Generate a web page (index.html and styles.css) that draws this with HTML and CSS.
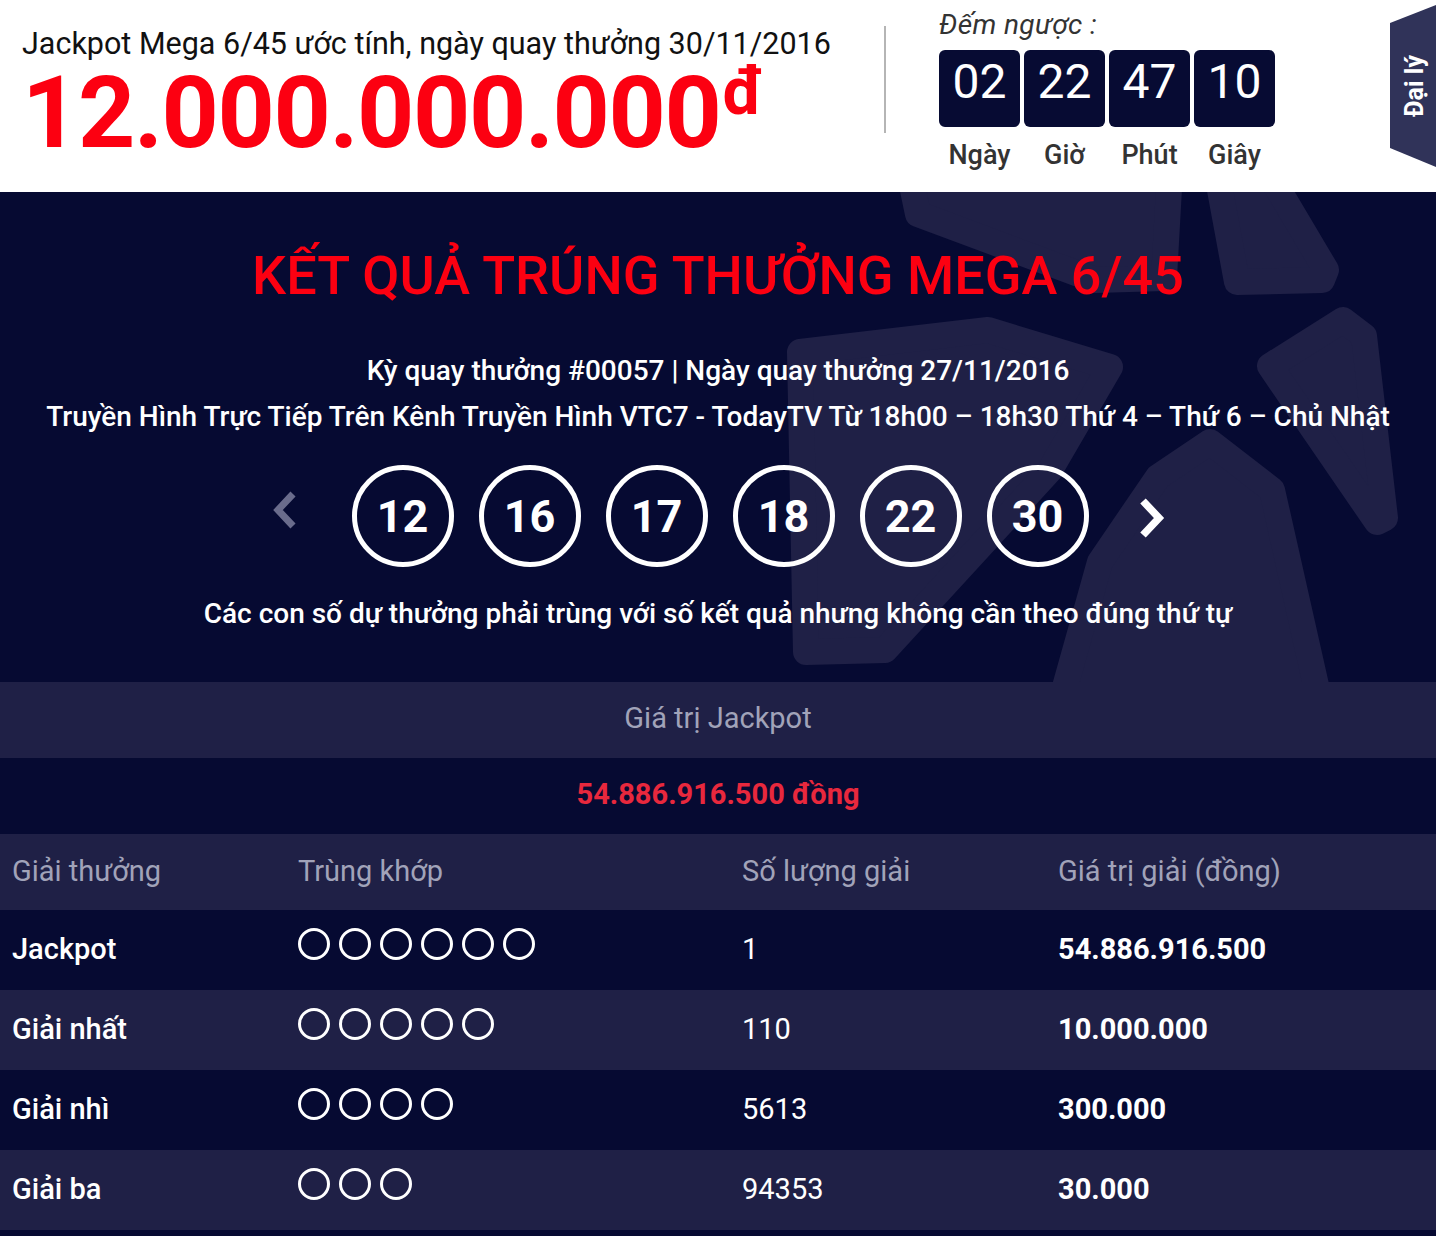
FILE: index.html
```html
<!DOCTYPE html>
<html lang="vi">
<head>
<meta charset="utf-8">
<title>Kết quả Mega 6/45</title>
<link rel="stylesheet" href="styles.css">
</head>
<body>
<header class="top">
  <div class="jp">
    <div class="jp-label">Jackpot Mega 6/45 ước tính, ngày quay thưởng 30/11/2016</div>
    <div class="jp-amount">12.000.000.000<span class="cur">đ</span></div>
  </div>
  <div class="divider"></div>
  <div class="countdown">
    <div class="cd-label">Đếm ngược :</div>
    <div class="cd-boxes">
      <div class="cd-box">02</div>
      <div class="cd-box">22</div>
      <div class="cd-box">47</div>
      <div class="cd-box">10</div>
    </div>
    <div class="cd-units">
      <span>Ngày</span><span>Giờ</span><span>Phút</span><span>Giây</span>
    </div>
  </div>
  <a class="agent-tab" href="#"><span>Đại lý</span></a>
</header>

<section class="results">
  <svg class="bg-logo" width="1436" height="490" viewBox="0 0 1436 490" aria-hidden="true">
    <g fill="#1f2046" stroke="#1f2046" stroke-width="26" stroke-linejoin="round">
      <polygon points="905,-40 1171,-40 1164,86 1095,88 918,22"/>
      <polygon points="1213,-40 1256,-40 1326,78 1322,88 1237,90"/>
      <polygon points="1270,174 1343,128 1364,144 1385,326 1377,330"/>
      <polygon points="1210,250 1272,298 1322,520 1058,520 1100,370 1158,285"/>
      <polygon points="800,160 988,138 1110,175 1050,278 885,458 806,460"/>
    </g>
  </svg>
  <div class="results-inner">
    <h1 class="res-title">KẾT QUẢ TRÚNG THƯỞNG MEGA 6/45</h1>
    <p class="res-info">Kỳ quay thưởng #00057 | Ngày quay thưởng 27/11/2016</p>
    <p class="res-info">Truyền Hình Trực Tiếp Trên Kênh Truyền Hình VTC7 - TodayTV Từ 18h00 – 18h30 Thứ 4 – Thứ 6 – Chủ Nhật</p>
    <div class="balls">
      <span class="nav prev">
        <svg width="26" height="38" viewBox="0 0 26 38"><polyline points="21,3 6,19 21,35" fill="none" stroke="#6a6c8c" stroke-width="7"/></svg>
      </span>
      <span class="ball">12</span>
      <span class="ball">16</span>
      <span class="ball">17</span>
      <span class="ball">18</span>
      <span class="ball">22</span>
      <span class="ball">30</span>
      <span class="nav next">
        <svg width="28" height="40" viewBox="0 0 28 40"><polyline points="6,3 22,20 6,37" fill="none" stroke="#ffffff" stroke-width="7.5"/></svg>
      </span>
    </div>
    <p class="res-note">Các con số dự thưởng phải trùng với số kết quả nhưng không cần theo đúng thứ tự</p>
  </div>
</section>

<section class="prizes">
  <div class="jp-value-head">Giá trị Jackpot</div>
  <div class="jp-value">54.886.916.500 đồng</div>
  <div class="prow head">
    <div>Giải thưởng</div>
    <div>Trùng khớp</div>
    <div>Số lượng giải</div>
    <div>Giá trị giải (đồng)</div>
  </div>
  <div class="prow dark">
    <div class="pname">Jackpot</div>
    <div class="dots"><i></i><i></i><i></i><i></i><i></i><i></i></div>
    <div>1</div>
    <div class="pval">54.886.916.500</div>
  </div>
  <div class="prow light">
    <div class="pname">Giải nhất</div>
    <div class="dots"><i></i><i></i><i></i><i></i><i></i></div>
    <div>110</div>
    <div class="pval">10.000.000</div>
  </div>
  <div class="prow dark">
    <div class="pname">Giải nhì</div>
    <div class="dots"><i></i><i></i><i></i><i></i></div>
    <div>5613</div>
    <div class="pval">300.000</div>
  </div>
  <div class="prow light">
    <div class="pname">Giải ba</div>
    <div class="dots"><i></i><i></i><i></i></div>
    <div>94353</div>
    <div class="pval">30.000</div>
  </div>
</section>
</body>
</html>
```

FILE: styles.css
```css
* { box-sizing: border-box; }
html, body { margin: 0; padding: 0; }
body {
  width: 1436px;
  font-family: Roboto, "Noto Sans", "Liberation Sans", sans-serif;
  background: #060a32;
  color: #fff;
}

/* ---------- top header ---------- */
.top {
  position: relative;
  display: flex;
  height: 192px;
  background: #fff;
  color: #000;
}
.jp {
  width: 863px;
  padding: 26px 0 0 22px;
}
.jp-label {
  font-size: 30.5px;
  line-height: 36px;
  color: #111;
  white-space: nowrap;
}
.jp-amount {
  margin-top: 1px;
  font-size: 100px;
  line-height: 100px;
  font-weight: 700;
  color: #fc0011;
  letter-spacing: -1.4px;
  white-space: nowrap;
}
.jp-amount .cur {
  display: inline-block;
  vertical-align: top;
  font-size: 66px;
  line-height: 58px;
  letter-spacing: 0;
  margin-left: 2px;
}
.divider {
  width: 2px;
  height: 107px;
  margin: 26px 0 0 21px;
  background: #b5b5b5;
}
.countdown {
  margin-left: 53px;
  padding-top: 10px;
}
.cd-label {
  font-size: 28px;
  line-height: 30px;
  font-style: italic;
  letter-spacing: 0.4px;
  color: #333;
}
.cd-boxes {
  display: flex;
  gap: 4px;
  margin-top: 10px;
}
.cd-box {
  width: 81px;
  height: 77px;
  border-radius: 6px;
  background: #070b33;
  color: #fff;
  font-size: 48px;
  line-height: 64px;
  text-align: center;
}
.cd-units {
  display: flex;
  gap: 4px;
  margin-top: 12px;
}
.cd-units span {
  width: 81px;
  text-align: center;
  font-size: 27px;
  line-height: 33px;
  font-weight: 500;
  color: #333;
}
.agent-tab {
  position: absolute;
  top: 5px;
  right: 0;
  width: 46px;
  height: 162px;
  background: #303359;
  clip-path: polygon(0 18px, 100% 0, 100% 100%, 0 143px);
  display: flex;
  align-items: center;
  justify-content: center;
  text-decoration: none;
}
.agent-tab span {
  writing-mode: vertical-rl;
  transform: rotate(180deg);
  color: #fff;
  font-weight: 700;
  font-size: 25px;
  line-height: 30px;
  margin-left: 4px;
}

/* ---------- results ---------- */
.results {
  position: relative;
  overflow: hidden;
  background: #060a32;
  height: 490px;
}
.bg-logo {
  position: absolute;
  left: 0;
  top: 0;
}
.results-inner {
  position: relative;
  padding-top: 54px;
  text-align: center;
}
.res-title {
  margin: 0 0 42px;
  font-size: 54px;
  line-height: 60px;
  font-weight: 500;
  color: #fc0011;
  white-space: nowrap;
}
.res-info {
  margin: 0;
  font-size: 28px;
  line-height: 46px;
  font-weight: 500;
  white-space: nowrap;
}
.balls {
  display: flex;
  justify-content: center;
  align-items: center;
  margin-top: 25px;
  gap: 25px;
}
.nav { display: flex; }
.nav.prev { margin-right: 29px; margin-top: -12px; }
.nav.next { margin-left: 23px; margin-top: 4px; }
.ball {
  width: 102px;
  height: 102px;
  border: 5px solid #fff;
  border-radius: 50%;
  display: flex;
  align-items: center;
  justify-content: center;
  font-size: 45px;
  font-weight: 700;
}
.res-note {
  margin: 24px 0 0;
  font-size: 28px;
  line-height: 46px;
  font-weight: 500;
  white-space: nowrap;
}

/* ---------- prizes table ---------- */
.prizes {
  background: #060a32;
  padding-bottom: 6px;
}
.jp-value-head {
  height: 76px;
  line-height: 72px;
  background: #1f2046;
  text-align: center;
  font-size: 29px;
  color: #a1a3b9;
}
.jp-value {
  height: 76px;
  line-height: 72px;
  text-align: center;
  font-size: 29px;
  font-weight: 700;
  color: #e8283d;
}
.prow {
  display: grid;
  grid-template-columns: 286px 444px 316px 1fr;
  align-items: center;
  height: 80px;
  padding-bottom: 3px;
  font-size: 29px;
}
.prow > div { padding-left: 12px; }
.prow.head {
  height: 76px;
  background: #1f2046;
  color: #a1a3b9;
}
.prow.light { background: #1f2046; }
.prow.dark { background: #060a32; }
.pname { font-weight: 500; }
.pval { font-weight: 700; }
.dots {
  display: flex;
  gap: 9px;
  margin-bottom: 9px;
}
.dots i {
  display: block;
  width: 32px;
  height: 32px;
  border: 3px solid #fff;
  border-radius: 50%;
}
```
